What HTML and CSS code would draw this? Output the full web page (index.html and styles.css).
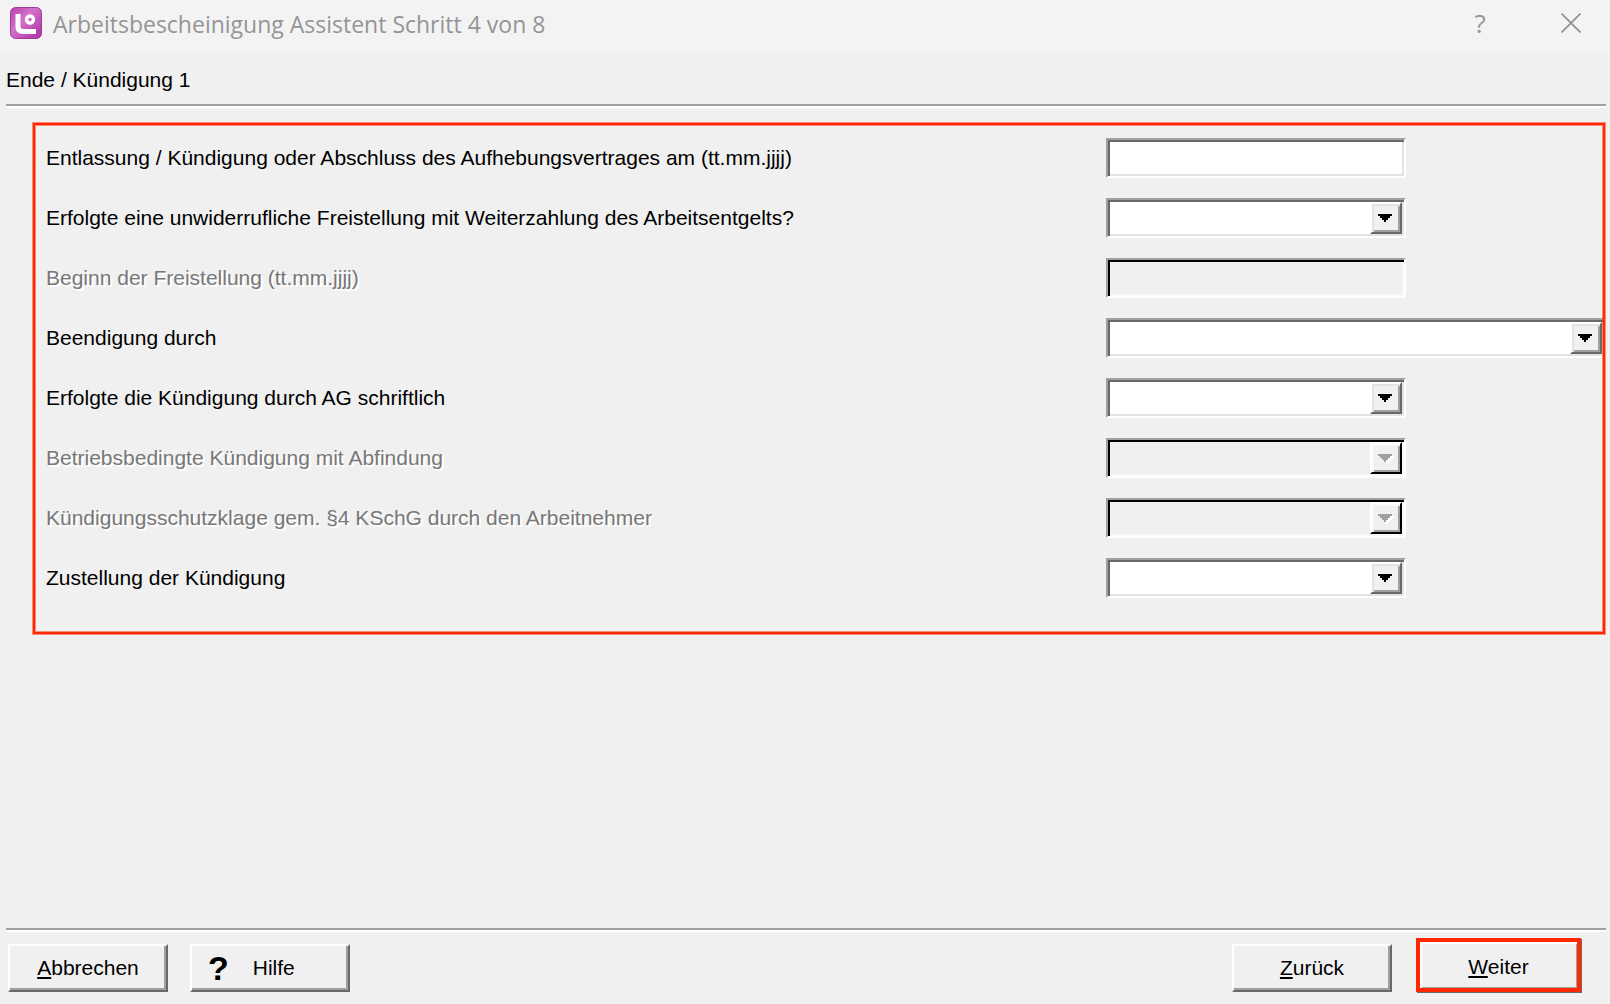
FILE: index.html
```html
<!doctype html>
<html lang="de">

<head>
  <meta charset="UTF-8">
  <meta name="viewport" content="width=device-width, initial-scale=1.0">
  <title>Arbeitsbescheinigung Assistent</title>
  <link rel="stylesheet" href="styles.css">
</head>

<body>

  <header class="titlebar">
    <svg class="logo" viewBox="0 0 32 32" aria-hidden="true">
      <defs>
        <linearGradient id="logoFill" x1="0" y1="0" x2="1" y2="1">
          <stop offset="0" stop-color="#b93fae" />
          <stop offset="0.4" stop-color="#d272ca" />
          <stop offset="1" stop-color="#aa2e9f" />
        </linearGradient>
      </defs>
      <rect width="32" height="32" fill="#fff" />
      <rect x="0.5" y="0.5" width="31" height="31" rx="5" fill="url(#logoFill)" stroke="#a23a9b" />
      <path d="M8 7v13q0 4.500 5 4.500h13" fill="none" stroke="#fff" stroke-width="5" />
      <circle cx="20" cy="12.500" r="3.500" fill="none" stroke="#fff" stroke-width="3.400" />
    </svg>
    <h1>Arbeitsbescheinigung Assistent Schritt 4 von 8</h1>
    <button class="title-btn" type="button" aria-label="Hilfe">?</button>
    <button class="title-btn" type="button" aria-label="Schließen">
      <svg width="20" height="20" viewBox="0 0 20 20"><path d="M0.5 0.5l19 19M19.5 0.5l-19 19" stroke="#8f8f8f" stroke-width="1.6" /></svg>
    </button>
  </header>

  <form class="wizard">
    <h2>Ende / Kündigung 1</h2>

    <div class="fields">
      <div class="row">
        <label for="entlassung">Entlassung / Kündigung oder Abschluss des Aufhebungsvertrages am (tt.mm.jjjj)</label>
        <input class="field" id="entlassung" type="text">
      </div>
      <div class="row">
        <label for="freistellung">Erfolgte eine unwiderrufliche Freistellung mit Weiterzahlung des Arbeitsentgelts?</label>
        <div class="combo">
          <select class="field" id="freistellung"><option></option></select>
          <span class="drop"><svg viewBox="0 0 16 10"><path class="arrow" d="M0 0h14v2h-2v2h-2v2h-2v2h-2v-2h-2v-2h-2v-2h-2z" /></svg></span>
        </div>
      </div>
      <div class="row disabled">
        <label for="beginn">Beginn der Freistellung (tt.mm.jjjj)</label>
        <input class="field" id="beginn" type="text" disabled>
      </div>
      <div class="row">
        <label for="beendigung">Beendigung durch</label>
        <div class="combo wide">
          <select class="field" id="beendigung"><option></option></select>
          <span class="drop"><svg viewBox="0 0 16 10"><path class="arrow" d="M0 0h14v2h-2v2h-2v2h-2v2h-2v-2h-2v-2h-2v-2h-2z" /></svg></span>
        </div>
      </div>
      <div class="row">
        <label for="schriftlich">Erfolgte die Kündigung durch AG schriftlich</label>
        <div class="combo">
          <select class="field" id="schriftlich"><option></option></select>
          <span class="drop"><svg viewBox="0 0 16 10"><path class="arrow" d="M0 0h14v2h-2v2h-2v2h-2v2h-2v-2h-2v-2h-2v-2h-2z" /></svg></span>
        </div>
      </div>
      <div class="row disabled">
        <label for="abfindung">Betriebsbedingte Kündigung mit Abfindung</label>
        <div class="combo">
          <select class="field" id="abfindung" disabled><option></option></select>
          <span class="drop"><svg viewBox="0 0 16 10"><path class="shade" d="M2 2h14v2h-2v2h-2v2h-2v2h-2v-2h-2v-2h-2v-2h-2z" /><path class="arrow" d="M0 0h14v2h-2v2h-2v2h-2v2h-2v-2h-2v-2h-2v-2h-2z" /></svg></span>
        </div>
      </div>
      <div class="row disabled">
        <label for="klage">Kündigungsschutzklage gem. §4 KSchG durch den Arbeitnehmer</label>
        <div class="combo">
          <select class="field" id="klage" disabled><option></option></select>
          <span class="drop"><svg viewBox="0 0 16 10"><path class="shade" d="M2 2h14v2h-2v2h-2v2h-2v2h-2v-2h-2v-2h-2v-2h-2z" /><path class="arrow" d="M0 0h14v2h-2v2h-2v2h-2v2h-2v-2h-2v-2h-2v-2h-2z" /></svg></span>
        </div>
      </div>
      <div class="row">
        <label for="zustellung">Zustellung der Kündigung</label>
        <div class="combo">
          <select class="field" id="zustellung"><option></option></select>
          <span class="drop"><svg viewBox="0 0 16 10"><path class="arrow" d="M0 0h14v2h-2v2h-2v2h-2v2h-2v-2h-2v-2h-2v-2h-2z" /></svg></span>
        </div>
      </div>
    </div>

    <footer class="buttons">
      <button class="btn" type="button"><u>A</u>bbrechen</button>
      <button class="btn btn-help" type="button"><b>?</b>Hilfe</button>
      <button class="btn btn-back" type="button"><u>Z</u>urück</button>
      <button class="btn btn-next" type="submit"><u>W</u>eiter</button>
    </footer>
  </form>

</body>

</html>
```

FILE: styles.css
```css
* {
  margin: 0;
  padding: 0;
  box-sizing: border-box;
}

body {
  display: flex;
  flex-direction: column;
  min-height: 100vh;
  background: #f0f0f0;
  color: #000;
  font-family: "Liberation Sans", Arial, sans-serif;
  font-size: 21px;
}

button,
input,
select {
  font: inherit;
  color: inherit;
}

/* title bar */

.titlebar {
  display: flex;
  align-items: center;
  height: 54px;
  padding: 0 20px 8px 10px;
  background: #f3f3f3;
  color: #959595;
  font-family: "Open Sans", "Noto Sans", sans-serif;
}

.logo {
  width: 32px;
  height: 32px;
  margin-right: 11px;
}

.titlebar h1 {
  flex: 1;
  padding-top: 2px;
  font-size: 23px;
  font-weight: 400;
  line-height: 32px;
}

.title-btn {
  display: flex;
  align-items: center;
  justify-content: center;
  width: 38px;
  height: 38px;
  margin-left: 53px;
  border: none;
  background: none;
  font-size: 26px;
  line-height: 32px;
}

/* page */

.wizard {
  display: flex;
  flex: 1;
  flex-direction: column;
  padding: 0 4px 0 6px;
}

.wizard h2 {
  padding: 10px 0 8px;
  border-bottom: 2px solid #a0a0a0;
  box-shadow: 0 2px #fff;
  font-size: 21px;
  font-weight: 400;
  line-height: 32px;
}

.fields {
  position: relative;
  display: grid;
  gap: 20px;
  margin: 16px 0 0 26px;
  padding: 16px 0 37px 14px;
}

/* red marking lies over the wide list */
.fields::after {
  content: "";
  position: absolute;
  inset: 1px;
  border: 2px solid #ff2800;
  box-shadow: 0 0 0 1px rgba(255, 40, 0, 0.5), inset 0 0 0 1px rgba(255, 40, 0, 0.5);
  pointer-events: none;
}

.row {
  display: grid;
  grid-template-columns: 1fr 500px;
  align-items: center;
}

.disabled label {
  color: #787878;
  text-shadow: 2px 2px #fff;
}

.field {
  display: block;
  width: 300px;
  height: 40px;
  padding: 0 8px;
  appearance: none;
  border: 2px solid;
  border-color: #a0a0a0 #fff #fff #a0a0a0;
  border-radius: 0;
  outline: none;
  background: #fff;
  box-shadow: inset 2px 2px #696969, inset -2px -2px #e3e3e3;
}

.field:disabled {
  background: #f0f0f0;
  opacity: 1;
  box-shadow: inset 2px 2px #000, inset -2px -2px #f8f8f8;
}

.combo {
  position: relative;
  width: 300px;
}

.combo .field {
  width: 100%;
}

.wide {
  width: 500px;
}

.drop {
  position: absolute;
  top: 4px;
  right: 4px;
  width: 32px;
  height: 32px;
  padding: 10px 0 0 6px;
  border: 2px solid;
  border-color: #fff #696969 #696969 #fff;
  background: #f0f0f0;
  box-shadow: inset 2px 2px #e3e3e3, inset -2px -2px #a0a0a0;
  pointer-events: none;
}

.drop svg {
  display: block;
  width: 16px;
  height: 10px;
  shape-rendering: crispEdges;
}

.disabled .drop {
  border-color: #fff #000 #000 #fff;
  box-shadow: inset 2px 2px #f8f8f8, inset -2px -2px #a0a0a0;
}

.disabled .arrow {
  fill: #a0a0a0;
}

.shade {
  fill: #fff;
}

/* buttons */

.buttons {
  display: flex;
  align-items: flex-end;
  margin-top: auto;
  padding: 8px 25px 12px 2px;
  border-top: 2px solid #a0a0a0;
  box-shadow: inset 0 2px #fff;
}

.btn {
  width: 160px;
  height: 48px;
  border: 2px solid;
  border-color: #fff #696969 #696969 #fff;
  background: #f0f0f0;
  box-shadow: inset -2px -2px #a0a0a0;
}

.btn u {
  text-decoration-thickness: 2px;
  text-underline-offset: 2px;
}

.btn-help {
  display: flex;
  align-items: center;
  gap: 24px;
  margin-left: 22px;
  padding-left: 16px;
}

.btn-help b {
  font-size: 34px;
  line-height: 32px;
}

.btn-back {
  margin-left: auto;
}

.btn-next {
  width: 165px;
  height: 54px;
  margin-left: 24px;
  padding-top: 4px;
  border: 4px solid #ff2800;
  box-shadow: inset 2px 2px #fff, inset -1px -1px #a0a0a0, 1px 1px #696969;
}
```
